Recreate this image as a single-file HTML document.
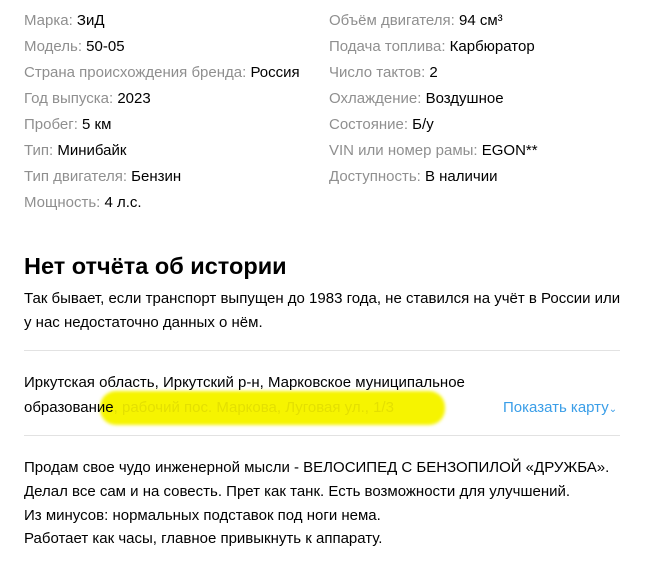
<!DOCTYPE html>
<html><head><meta charset="utf-8"><style>
body{margin:0;background:#fff;font-family:"Liberation Sans",Arial,sans-serif;font-size:15px;color:#000;width:650px;height:571px;overflow:hidden;position:relative}
.r{position:absolute;white-space:nowrap;line-height:18px}
.g{color:#8f8f8f}
.hl{position:absolute;background:#f6f400;border-radius:16px;filter:blur(1.5px)}
</style></head><body>
<div class="r" style="left:24px;top:12px"><span class="g">Марка:</span> ЗиД</div>
<div class="r" style="left:24px;top:38px"><span class="g">Модель:</span> 50-05</div>
<div class="r" style="left:24px;top:64px"><span class="g">Страна происхождения бренда:</span> Россия</div>
<div class="r" style="left:24px;top:90px"><span class="g">Год выпуска:</span> 2023</div>
<div class="r" style="left:24px;top:116px"><span class="g">Пробег:</span> 5 км</div>
<div class="r" style="left:24px;top:142px"><span class="g">Тип:</span> Минибайк</div>
<div class="r" style="left:24px;top:168px"><span class="g">Тип двигателя:</span> Бензин</div>
<div class="r" style="left:24px;top:194px"><span class="g">Мощность:</span> 4 л.с.</div>
<div class="r" style="left:329px;top:12px"><span class="g">Объём двигателя:</span> 94 см³</div>
<div class="r" style="left:329px;top:38px"><span class="g">Подача топлива:</span> Карбюратор</div>
<div class="r" style="left:329px;top:64px"><span class="g">Число тактов:</span> 2</div>
<div class="r" style="left:329px;top:90px"><span class="g">Охлаждение:</span> Воздушное</div>
<div class="r" style="left:329px;top:116px"><span class="g">Состояние:</span> Б/у</div>
<div class="r" style="left:329px;top:142px"><span class="g">VIN или номер рамы:</span> EGON**</div>
<div class="r" style="left:329px;top:168px"><span class="g">Доступность:</span> В наличии</div>
<div class="r" style="left:24px;top:253px;font-size:23.5px;font-weight:bold;line-height:26px">Нет отчёта об истории</div>
<div class="r" style="left:24px;top:290px">Так бывает, если транспорт выпущен до 1983 года, не ставился на учёт в России или</div>
<div class="r" style="left:24px;top:314px">у нас недостаточно данных о нём.</div>
<div style="position:absolute;left:24px;top:350px;width:596px;height:1px;background:#e2e2e2"></div>
<div class="hl" style="left:100px;top:391px;width:345px;height:34px"></div>
<div class="r" style="left:24px;top:374px">Иркутская область, Иркутский р-н, Марковское муниципальное</div>
<div class="r" style="left:24px;top:399px">образование<span style="color:#e4e000">, рабочий пос. Маркова, Луговая ул., 1/3</span></div>
<div class="r" style="left:503px;top:399px;color:#3a9ee8">Показать карту<span style="font-size:10px">&#8964;</span></div>
<div style="position:absolute;left:24px;top:435px;width:596px;height:1px;background:#e2e2e2"></div>
<div class="r" style="left:24px;top:459px">Продам свое чудо инженерной мысли - ВЕЛОСИПЕД С БЕНЗОПИЛОЙ «ДРУЖБА».</div>
<div class="r" style="left:24px;top:483px">Делал все сам и на совесть. Прет как танк. Есть возможности для улучшений.</div>
<div class="r" style="left:24px;top:507px">Из минусов: нормальных подставок под ноги нема.</div>
<div class="r" style="left:24px;top:530px">Работает как часы, главное привыкнуть к аппарату.</div>
</body></html>
